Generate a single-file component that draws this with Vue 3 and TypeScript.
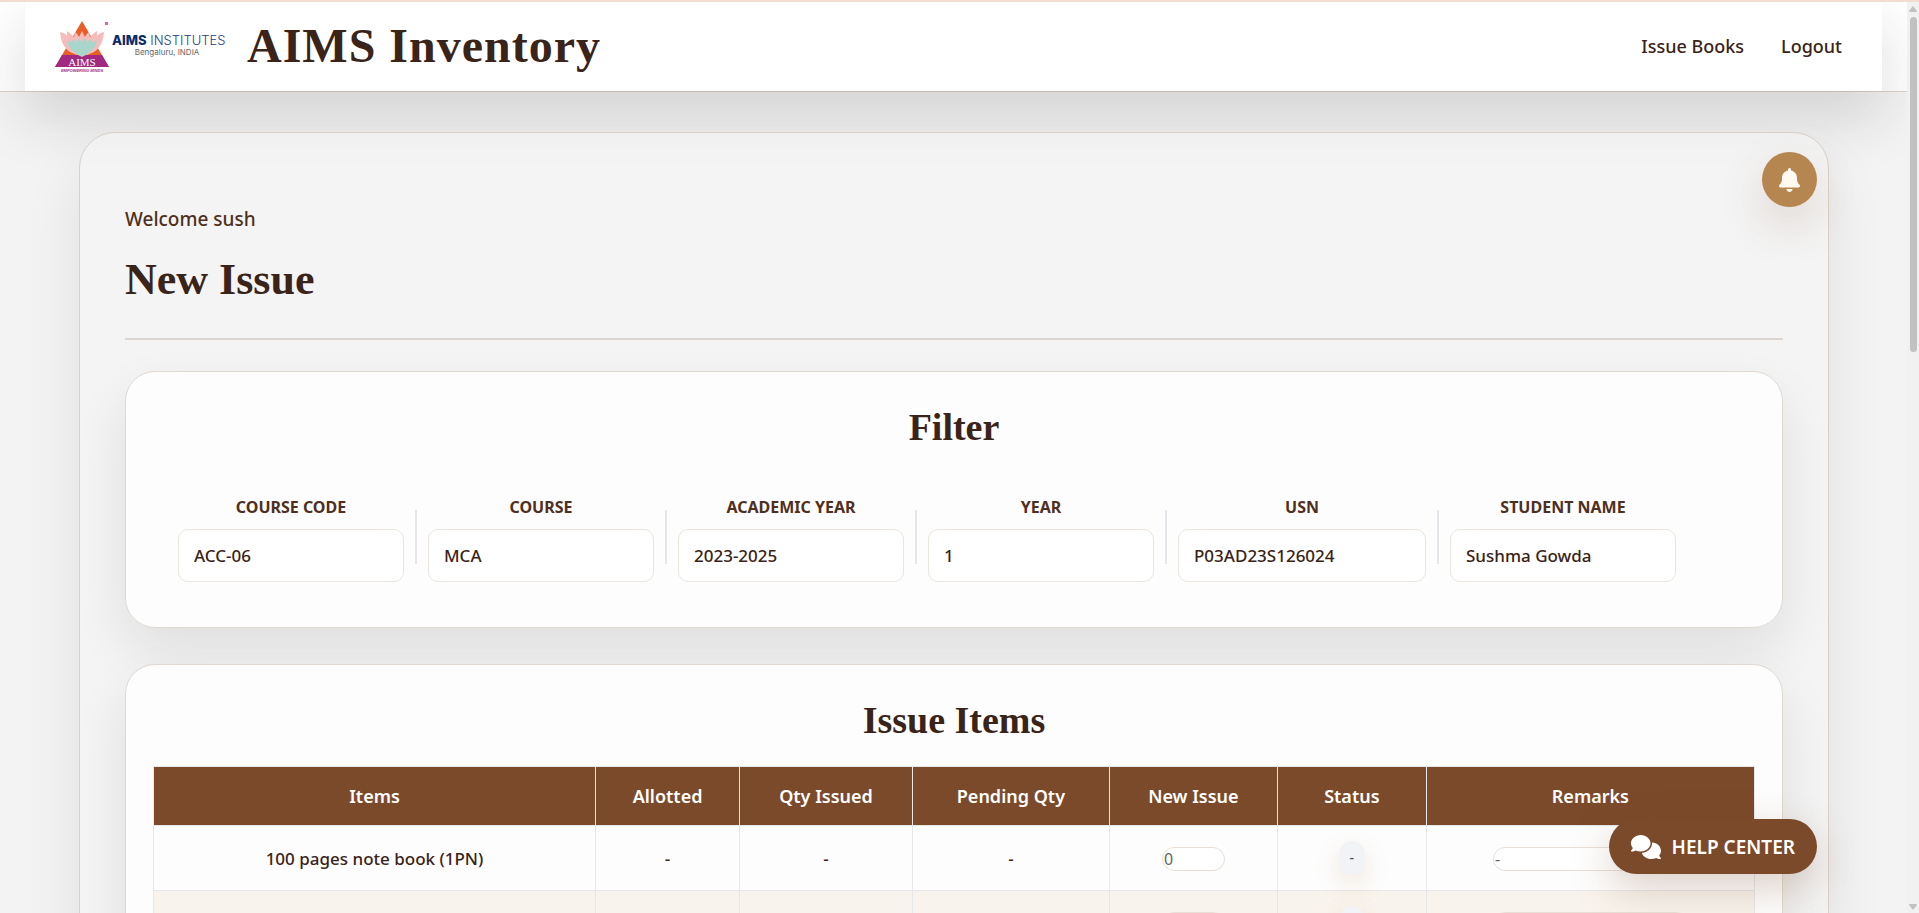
<script setup lang="ts">
import { ref } from 'vue'

interface Field {
  id: string
  label: string
  value: string
  wide?: boolean
}

interface Item {
  name: string
  allotted: string
  issued: string
  pending: string
  status: string
}

const fields = ref<Field[]>([
  { id: 'course-code', label: 'COURSE CODE', value: 'ACC-06' },
  { id: 'course', label: 'COURSE', value: 'MCA' },
  { id: 'academic-year', label: 'ACADEMIC YEAR', value: '2023-2025' },
  { id: 'year', label: 'YEAR', value: '1' },
  { id: 'usn', label: 'USN', value: 'P03AD23S126024', wide: true },
  { id: 'student-name', label: 'STUDENT NAME', value: 'Sushma Gowda' },
])

const columns: string[] = ['Items', 'Allotted', 'Qty Issued', 'Pending Qty', 'New Issue', 'Status', 'Remarks']

const items = ref<Item[]>([
  { name: '100 pages note book (1PN)', allotted: '-', issued: '-', pending: '-', status: '-' },
  { name: '', allotted: '', issued: '', pending: '', status: '' },
])
</script>

<template>
  <div class="shell">
    <div class="page">
      <header class="site-header">
        <div class="header-inner">
          <a class="brand" href="#">
            <svg class="logo" viewBox="0 0 180 56" role="img" aria-label="AIMS Institutes">
              <path d="M30 3 L57 49 L3 49 Z" fill="#e95d26" />
              <path
                d="M8 14 C12 15 14 16 15 18 L15 13 C18 15 20 17 22 19 L23 14 C25 15 26 17 27 19 L30 13 L33 19 C34 17 35 15 37 14 L38 19 C40 17 42 15 45 13 L45 18 C46 16 48 15 52 14 C51 24 48 30 42 34 L30 39 L18 34 C12 30 9 24 8 14 Z"
                fill="#f5bcbb"
              />
              <path
                d="M15 23 L20 24 L21 21 L25 24 L27 20 L30 24 L33 20 L35 24 L39 21 L40 24 L45 23 C44 30 38 35 30 39 C22 35 16 30 15 23 Z"
                fill="#a9d6ca"
              />
              <path d="M10 37 L26 37 L30 39 L34 37 L50 37 L57 49 L3 49 Z" fill="#a12a80" />
              <text class="logo-mark" x="30" y="48" text-anchor="middle">AIMS</text>
              <text class="logo-motto" x="30" y="54" text-anchor="middle">EMPOWERING MINDS</text>
              <rect x="53" y="4" width="3" height="3" fill="#c46cb2" />
              <text class="logo-name" x="60" y="27"><tspan class="logo-strong">AIMS</tspan> INSTITUTES</text>
              <text class="logo-place" x="115" y="37" text-anchor="middle">Bengaluru, INDIA</text>
            </svg>
            <span class="brand-name">AIMS Inventory</span>
          </a>
          <nav class="nav">
            <a href="#">Issue Books</a>
            <a href="#">Logout</a>
          </nav>
        </div>
      </header>

      <main class="panel">
        <p class="welcome">Welcome sush</p>
        <h1>New Issue</h1>
        <hr />

        <section class="card">
          <h2>Filter</h2>
          <form class="filters" @submit.prevent>
            <template v-for="(field, i) in fields" :key="field.id">
              <span v-if="i > 0" class="divider"></span>
              <div class="field" :class="{ wide: field.wide }">
                <label :for="field.id">{{ field.label }}</label>
                <input :id="field.id" v-model="field.value" type="text" />
              </div>
            </template>
          </form>
        </section>

        <section class="card items-card">
          <h2>Issue Items</h2>
          <table>
            <colgroup>
              <col class="c-items" /><col class="c-allotted" /><col class="c-issued" /><col class="c-pending" />
              <col class="c-new" /><col class="c-status" /><col class="c-remarks" />
            </colgroup>
            <thead>
              <tr>
                <th v-for="c in columns" :key="c" scope="col">{{ c }}</th>
              </tr>
            </thead>
            <tbody>
              <tr v-for="(item, i) in items" :key="i">
                <td>{{ item.name }}</td>
                <td>{{ item.allotted }}</td>
                <td>{{ item.issued }}</td>
                <td>{{ item.pending }}</td>
                <td><input class="qty" type="text" placeholder="0" aria-label="New issue quantity" /></td>
                <td><span class="status">{{ item.status }}</span></td>
                <td><input class="remarks" type="text" placeholder="-" aria-label="Remarks" /></td>
              </tr>
            </tbody>
          </table>
        </section>
      </main>

      <button class="bell" type="button" aria-label="Notifications">
        <svg viewBox="0 0 448 512" fill="currentColor">
          <path d="M224 0c-17.7 0-32 14.3-32 32V51.2C119 66 64 130.6 64 208v18.8c0 47-17.3 92.4-48.5 127.6l-7.4 8.3c-8.4 9.4-10.4 22.9-5.3 34.4S19.4 416 32 416H416c12.6 0 24-7.4 29.2-18.9s3.1-25-5.3-34.4l-7.4-8.3C401.3 319.2 384 273.9 384 226.8V208c0-77.4-55-142-128-156.8V32c0-17.7-14.3-32-32-32zm45.3 493.3c12-12 18.7-28.3 18.7-45.3H224 160c0 17 6.7 33.3 18.7 45.3s28.3 18.7 45.3 18.7s33.3-6.7 45.3-18.7z" />
        </svg>
      </button>

      <button class="help" type="button">
        <svg viewBox="0 0 640 512" fill="currentColor" aria-hidden="true">
          <path d="M208 352c114.9 0 208-78.8 208-176S322.9 0 208 0S0 78.8 0 176c0 38.6 14.7 74.3 39.6 103.4c-3.5 9.4-8.7 17.7-14.2 24.7c-4.8 6.2-9.7 11-13.3 14.3c-1.8 1.6-3.3 2.9-4.3 3.7c-.5 .4-.9 .7-1.1 .8l-.2 .2C1 327.2-1.4 334.4 .8 340.9S9.1 352 16 352c21.8 0 43.8-5.6 62.1-12.5c9.2-3.5 17.8-7.4 25.2-11.4C134.1 343.3 169.8 352 208 352zM448 176c0 112.3-99.1 196.9-216.5 207C255.8 457.4 336.4 512 432 512c38.2 0 73.9-8.7 104.7-23.9c7.5 4 16 7.9 25.2 11.4c18.3 6.9 40.3 12.5 62.1 12.5c6.9 0 13.1-4.5 15.2-11.1c2.1-6.6-.2-13.8-5.8-17.9l-.2-.2c-.2-.2-.6-.4-1.1-.8c-1-.8-2.5-2-4.3-3.7c-3.6-3.3-8.5-8.1-13.3-14.3c-5.5-7-10.7-15.4-14.2-24.7c24.9-29 39.6-64.7 39.6-103.4c0-92.8-84.9-168.9-192.6-175.5c.4 5.1 .6 10.3 .6 15.5z" />
        </svg>
        HELP CENTER
      </button>
    </div>

    <div class="scrollbar" aria-hidden="true">
      <svg viewBox="0 0 8 6"><path d="M4 0 L8 5 Q8 6 7 6 H1 Q0 6 0 5 Z" /></svg>
      <div class="track"><div class="thumb"></div></div>
      <svg viewBox="0 0 8 6"><path d="M4 6 L8 1 Q8 0 7 0 H1 Q0 0 0 1 Z" /></svg>
    </div>
  </div>
</template>

<style>
body {
  margin: 0;
  background: #f3f3f3;
}
</style>

<style scoped>
.shell {
  display: grid;
  grid-template-columns: minmax(0, 1fr) 12px;
  height: 100vh;
  box-sizing: border-box;
  border-top: 2px solid #f4dcd2;
  overflow: hidden;
  font-family: "Segoe UI", "Noto Sans", sans-serif;
  font-size: 17px;
  color: #3a2318;
}

.page {
  position: relative;
  overflow: hidden;
  background: #f3f3f3;
}

.site-header {
  padding: 0 25px;
  background: #fff;
  border-bottom: 1px solid #dad2c8;
}

.header-inner {
  display: flex;
  align-items: center;
  justify-content: space-between;
  box-sizing: border-box;
  height: 89px;
  padding: 0 40px 2px 27px;
  background: #fff;
  box-shadow: 0 25px 60px rgba(45, 32, 28, 0.16);
}

.brand {
  display: flex;
  align-items: center;
  gap: 15px;
  color: #3a2318;
  text-decoration: none;
}

.logo {
  width: 180px;
  height: 56px;
}

.logo-mark {
  font: 11px "Liberation Serif", serif;
  fill: #fff;
}

.logo-motto {
  font: italic bold 4px "Liberation Sans", sans-serif;
  fill: #a12a80;
}

.logo-name {
  font: 300 13px Inter, sans-serif;
  fill: #24407c;
}

.logo-strong {
  font-weight: 800;
  fill: #0d2c66;
}

.logo-place {
  font: 8px Inter, sans-serif;
  fill: #666;
}

.brand-name {
  font: bold 48px "Liberation Serif", "Times New Roman", serif;
  letter-spacing: 1px;
}

.nav {
  display: flex;
  gap: 37px;
  font-size: 18px;
  font-weight: 500;
}

.nav a {
  color: #3a2318;
  text-decoration: none;
}

.panel {
  position: relative;
  margin: 40px 78px 0 79px;
  padding: 72px 45px 60px;
  border: 1px solid #dad0c6;
  border-radius: 36px;
  background: rgba(245, 245, 245, 0.6);
  box-shadow: 0 30px 60px rgba(40, 30, 25, 0.08);
}

.welcome {
  margin: 0 0 17px;
  font-size: 19px;
  line-height: 28px;
  font-weight: 500;
  color: #4f2f20;
}

h1,
h2 {
  margin: 0;
  font-family: "Liberation Serif", "Times New Roman", serif;
  font-weight: bold;
}

h1 {
  font-size: 44px;
  line-height: 60px;
}

hr {
  height: 2px;
  margin: 28px 0 31px;
  border: 0;
  background: #ddd5cf;
}

.card {
  padding: 31px 27px 45px;
  border: 1px solid #dfd8d0;
  border-radius: 30px;
  background: rgba(255, 255, 255, 0.82);
  box-shadow: 0 24px 54px rgba(30, 25, 25, 0.09);
}

.card h2 {
  font-size: 38px;
  line-height: 48px;
  text-align: center;
}

.items-card {
  margin-top: 36px;
}

.filters {
  display: flex;
  align-items: flex-end;
  gap: 11px;
  margin-top: 44px;
  padding: 0 25px;
}

.field {
  display: flex;
  flex-direction: column;
  gap: 10px;
  width: 226px;
}

.field.wide {
  width: 248px;
}

.field label {
  font-size: 16px;
  line-height: 24px;
  font-weight: 700;
  text-align: center;
  color: #4f2f20;
}

.field input {
  box-sizing: border-box;
  width: 100%;
  height: 53px;
  padding: 0 15px;
  border: 1px solid #ebe5dd;
  border-radius: 10px;
  background: #fff;
  font: 500 17px "Segoe UI", "Noto Sans", sans-serif;
  color: #3a2318;
}

.divider {
  width: 2px;
  height: 54px;
  margin-bottom: 18px;
  background: #e5e5ea;
}

table {
  width: 100%;
  margin-top: 22px;
  border-collapse: collapse;
  table-layout: fixed;
  text-align: center;
}

.c-items { width: 442px; }
.c-allotted { width: 9%; }
.c-issued { width: 10.8%; }
.c-pending { width: 12.3%; }
.c-new { width: 10.5%; }
.c-status { width: 9.3%; }
.c-remarks { width: 20.5%; }

th,
td {
  padding: 0;
  border: 1px solid #e5e7eb;
}

th {
  height: 58px;
  background: #7b4a2b;
  font-size: 18px;
  font-weight: 600;
  color: #fff;
}

td {
  height: 64px;
  font-weight: 500;
}

tbody tr:nth-child(even) {
  background: #f8f3ec;
}

td input {
  box-sizing: border-box;
  height: 24px;
  padding: 0 1px;
  border: 1px solid #e8e0d6;
  border-radius: 12px;
  background: #fff;
  vertical-align: middle;
  font: 16px "Segoe UI", "Noto Sans", sans-serif;
}

td input::placeholder {
  color: #666;
  opacity: 1;
}

.qty {
  width: 63px;
}

.remarks {
  width: 195px;
}

.status {
  display: inline-block;
  width: 26px;
  height: 34px;
  border-radius: 13px;
  background: #f1f3f6;
  box-shadow: 0 10px 25px rgba(182, 134, 80, 0.2);
  vertical-align: middle;
  font-size: 14px;
  line-height: 34px;
  color: #4b5563;
}

.bell,
.help {
  position: absolute;
  right: 90px;
  display: flex;
  align-items: center;
  justify-content: center;
  height: 55px;
  border: 0;
  border-radius: 28px;
}

.bell {
  top: 150px;
  width: 55px;
  padding: 0;
  background: #b68650;
  color: #fff9f2;
  box-shadow: 0 18px 45px rgba(123, 74, 43, 0.18);
}

.bell svg {
  width: 21px;
  height: 24px;
}

.help {
  bottom: 39px;
  gap: 11px;
  padding: 0 22px;
  background: #7b4a2b;
  color: #fff;
  font: 600 19px "Segoe UI", "Noto Sans", sans-serif;
  box-shadow: 0 14px 40px rgba(123, 74, 43, 0.25);
}

.help svg {
  width: 30px;
  height: 24px;
}

.scrollbar {
  display: flex;
  flex-direction: column;
  align-items: center;
  gap: 5px;
  padding: 4px 0 3px;
  background: #f1f1f1;
}

.scrollbar svg {
  width: 8px;
  height: 6px;
  fill: #c1c1c1;
}

.track {
  flex: 1;
}

.thumb {
  width: 7px;
  height: 38%;
  border-radius: 4px;
  background: #c1c1c1;
}
</style>
